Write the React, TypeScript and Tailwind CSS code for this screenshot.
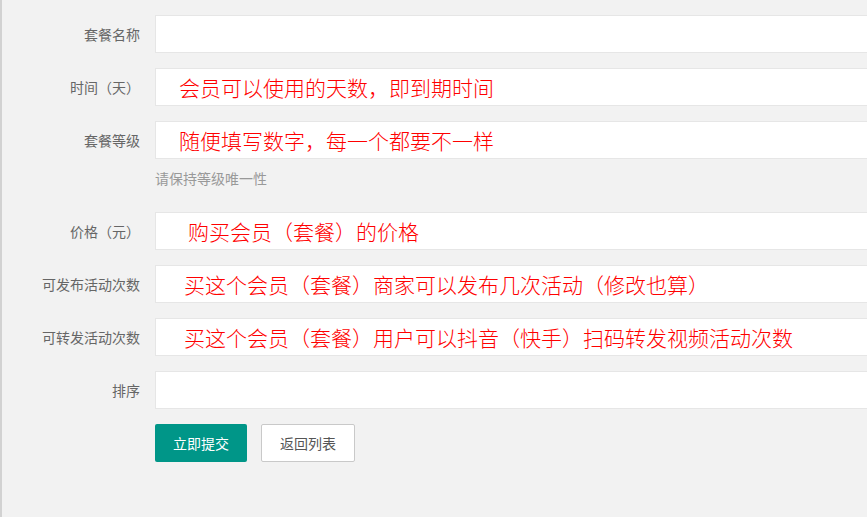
const rows: { label: string; note?: string; pad?: string; hint?: string }[] = [
  { label: "套餐名称" },
  { label: "时间（天）", note: "会员可以使用的天数，即到期时间", pad: "pl-[23px]" },
  { label: "套餐等级", note: "随便填写数字，每一个都要不一样", pad: "pl-[23px]", hint: "请保持等级唯一性" },
  { label: "价格（元）", note: "购买会员（套餐）的价格", pad: "pl-[32px]" },
  { label: "可发布活动次数", note: "买这个会员（套餐）商家可以发布几次活动（修改也算）", pad: "pl-[28px]" },
  { label: "可转发活动次数", note: "买这个会员（套餐）用户可以抖音（快手）扫码转发视频活动次数", pad: "pl-[28px]" },
  { label: "排序" },
];

export default function App() {
  return (
    <div
      className="w-[867px] h-[517px] overflow-hidden bg-[#f2f2f2] border-l-2 border-[#d2d2d2]"
      style={{ fontFamily: '"Noto Sans CJK SC", "Noto Sans", sans-serif' }}
    >
      <div className="pt-[15px]">
        {rows.map((r) => (
          <div key={r.label}>
            <div className="flex mb-[15px]">
              <label className="w-[138px] text-right text-[14px] leading-[38px] text-[#666] whitespace-nowrap">
                {r.label}
              </label>
              <div className="ml-[15px] flex-1 -mr-[10px] h-[38px] bg-white border border-[#e6e6e6] border-r-0">
                {r.note && (
                  <div className={`${r.pad} text-[21px] font-light leading-[36px] text-[#ff0000] whitespace-nowrap`}>
                    {r.note}
                  </div>
                )}
              </div>
            </div>
            {r.hint && (
              <div className="ml-[153px] -mt-[15px] mb-[15px] h-[38px] leading-[38px] text-[14px] text-[#999]">
                {r.hint}
              </div>
            )}
          </div>
        ))}
        <div className="flex ml-[153px] gap-[14px]">
          <button className="w-[92px] h-[38px] rounded-[2px] bg-[#009688] text-white text-[14px]">立即提交</button>
          <button className="w-[94px] h-[38px] rounded-[2px] bg-white border border-[#c9c9c9] text-[#555] text-[14px]">
            返回列表
          </button>
        </div>
      </div>
    </div>
  );
}
